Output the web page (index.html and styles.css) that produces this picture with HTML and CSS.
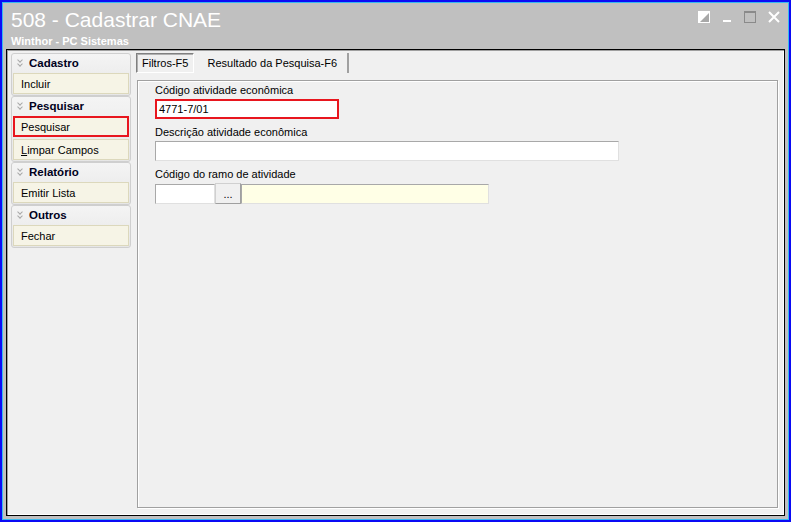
FILE: index.html
```html
<!DOCTYPE html>
<html lang="pt-BR">
<head>
    <meta charset="UTF-8">
    <title>508 - Cadastrar CNAE</title>
    <link rel="stylesheet" href="styles.css">
</head>
<body>
    <div class="window">
        <div class="frame">
            <div class="titlebar">
                <div class="titles">
                    <div class="title">508 - Cadastrar CNAE</div>
                    <div class="subtitle">Winthor - PC Sistemas</div>
                </div>
                <div class="controls">
                    <svg width="12" height="12" viewBox="0 0 12 12">
                        <rect x="0.5" y="0.5" width="11" height="11" fill="#fff" stroke="#fff"/>
                        <polygon points="11,2 11,11 2,11" fill="#a8a8a8"/>
                    </svg>
                    <svg width="10" height="12" viewBox="0 0 10 12">
                        <rect x="1" y="9" width="8" height="2" fill="#fff"/>
                    </svg>
                    <svg width="12" height="12" viewBox="0 0 12 12">
                        <rect x="0.5" y="0.5" width="11" height="11" fill="none" stroke="#8a8a8a"/>
                        <rect x="0" y="0" width="12" height="2" fill="#8a8a8a"/>
                    </svg>
                    <svg width="12" height="12" viewBox="0 0 12 12">
                        <path d="M1 1 L11 11 M11 1 L1 11" stroke="#fff" stroke-width="2"/>
                    </svg>
                </div>
            </div>

            <div class="content">
                <div class="sidebar">
                    <div class="group">
                        <div class="group-head"><span class="chev"></span>Cadastro</div>
                        <div class="item">Incluir</div>
                    </div>
                    <div class="group">
                        <div class="group-head"><span class="chev"></span>Pesquisar</div>
                        <div class="item selected">Pesquisar</div>
                        <div class="item"><u>L</u>impar Campos</div>
                    </div>
                    <div class="group">
                        <div class="group-head"><span class="chev"></span>Relatório</div>
                        <div class="item">Emitir Lista</div>
                    </div>
                    <div class="group">
                        <div class="group-head"><span class="chev"></span>Outros</div>
                        <div class="item">Fechar</div>
                    </div>
                </div>

                <div class="main">
                    <div class="tabs">
                        <div class="tab active">Filtros-F5</div>
                        <div class="tab">Resultado da Pesquisa-F6</div>
                    </div>
                    <div class="panel">
                        <div class="field">
                            <label>Código atividade econômica</label>
                            <div class="input code highlight">4771-7/01</div>
                        </div>
                        <div class="field">
                            <label>Descrição atividade econômica</label>
                            <div class="input desc"></div>
                        </div>
                        <div class="field">
                            <label>Código do ramo de atividade</label>
                            <div class="lookup">
                                <div class="input small"></div>
                                <div class="dots">...</div>
                                <div class="input readonly"></div>
                            </div>
                        </div>
                    </div>
                </div>
            </div>
        </div>
    </div>
</body>
</html>
```

FILE: styles.css
```css
html, body {
    margin: 0;
    padding: 0;
}
body {
    width: 791px;
    height: 522px;
    font-family: "Liberation Sans", Arial, sans-serif;
    font-size: 12px;
    color: #000;
    overflow: hidden;
}
.window {
    box-sizing: border-box;
    width: 791px;
    height: 522px;
    border: 2px solid #0a0af5;
}
.frame {
    box-sizing: border-box;
    height: 100%;
    border: 1px solid #38b8f0;
    background: #c0c0c0;
    display: flex;
    flex-direction: column;
    padding: 0 3px 3px 3px;
}
.titlebar {
    height: 46px;
    display: flex;
    justify-content: space-between;
}
.titles {
    padding: 5px 0 0 5px;
    color: #fff;
}
.title {
    font-size: 21px;
    line-height: 24px;
}
.subtitle {
    font-size: 11px;
    font-weight: bold;
    line-height: 14px;
    margin-top: 2px;
}
.controls {
    display: flex;
    align-items: flex-start;
    gap: 12px;
    padding: 8px 5px 0 0;
}
.controls svg {
    display: block;
}

.content {
    flex: 1;
    display: flex;
    gap: 6px;
    background: #f0f0f0;
    border: 1px solid #000;
    box-shadow: inset 1px 1px 0 #a0a0a0, inset -1px -1px 0 #fff;
    padding: 3px 6px 7px 4px;
}

/* menu lateral */
.sidebar {
    width: 120px;
    display: flex;
    flex-direction: column;
    gap: 0;
}
.group {
    border: 1px solid #cfcfcf;
    border-radius: 3px;
    background: linear-gradient(#f4f4f4, #e6e6e6);
    padding: 0 1px 1px 1px;
    display: flex;
    flex-direction: column;
    gap: 2px;
}
.group-head {
    height: 17px;
    display: flex;
    align-items: center;
    font-weight: bold;
    font-size: 11.5px;
    color: #000020;
    padding-left: 4px;
}
.chev {
    width: 7px;
    height: 8px;
    margin-right: 5px;
    position: relative;
}
.chev::before, .chev::after {
    content: "";
    position: absolute;
    left: 1px;
    width: 3px;
    height: 3px;
    border-right: 1px solid #a8a8a8;
    border-bottom: 1px solid #a8a8a8;
    transform: rotate(45deg);
}
.chev::before { top: -1px; }
.chev::after { top: 3px; }
.item {
    height: 21px;
    box-sizing: border-box;
    border: 1px solid #dcd8bc;
    background: #f6f4e6;
    display: flex;
    align-items: center;
    padding-left: 7px;
    font-size: 11px;
}
.item u {
    text-decoration: underline;
}
.item.selected {
    border: 2px solid #e8161e;
    padding-left: 6px;
}

/* abas */
.main {
    flex: 1;
    display: flex;
    flex-direction: column;
}
.tabs {
    display: flex;
    height: 22px;
    align-items: flex-start;
    margin-left: -1px;
    margin-bottom: 5px;
}
.tab {
    height: 20px;
    display: flex;
    align-items: center;
    padding: 0 10px;
    font-size: 11px;
    border-right: 2px solid #a0a0a0;
}
.tab.active {
    box-sizing: border-box;
    border: 1px solid #fff;
    border-top-color: #808080;
    border-left-color: #808080;
    box-shadow: inset 1px 1px 0 #b0b0b0;
    padding: 0 5px;
    margin-right: 3px;
}
.panel {
    flex: 1;
    border: 1px solid #a0a0a0;
    box-shadow: inset 1px 1px 0 #fff, 1px 1px 0 #fff;
    padding: 1px 0 0 17px;
}

.field label {
    display: block;
    height: 15px;
    line-height: 15px;
    font-size: 11px;
    margin-top: 1px;
}
.field + .field {
    margin-top: 6px;
}
.input {
    box-sizing: border-box;
    height: 20px;
    background: #fff;
    border: 1px solid #a8a8a8;
    border-bottom-color: #e0e0e0;
    border-right-color: #e0e0e0;
    font-size: 11px;
    display: flex;
    align-items: center;
    padding-left: 2px;
    margin-top: 1px;
}
.input.code {
    width: 184px;
}
.input.highlight {
    border: 2px solid #e8161e;
    padding-left: 2px;
}
.input.desc {
    width: 464px;
}
.lookup {
    display: flex;
    align-items: center;
    margin-top: 1px;
}
.lookup .input {
    margin-top: 0;
}
.input.small {
    width: 60px;
}
.dots {
    box-sizing: border-box;
    width: 26px;
    height: 21px;
    border: 1px solid #d0d0d0;
    border-bottom-color: #a0a0a0;
    border-right-color: #a0a0a0;
    background: #f0f0f0;
    display: flex;
    justify-content: center;
    align-items: center;
    font-size: 11px;
}
.input.readonly {
    width: 248px;
    background: #ffffe6;
}
```
